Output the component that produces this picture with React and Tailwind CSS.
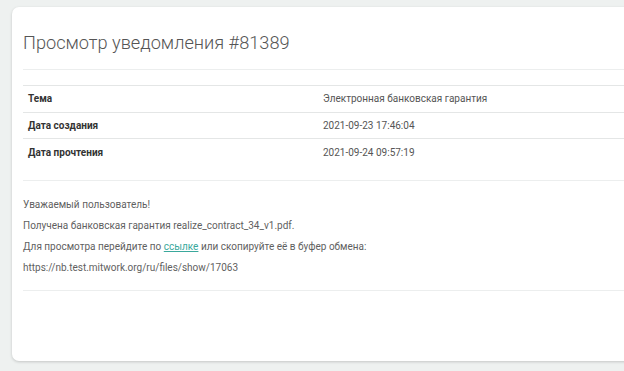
export default function App() {
  const rows = [
    ["Тема", "Электронная банковская гарантия"],
    ["Дата создания", "2021-09-23 17:46:04"],
    ["Дата прочтения", "2021-09-24 09:57:19"],
  ];
  return (
    <div
      className="w-[624px] h-[371px] overflow-hidden bg-[#eef1f0] pt-[7px] pl-[12px]"
      style={{ fontFamily: "Roboto, 'Liberation Sans', sans-serif" }}
    >
      <div className="w-[700px] h-[354px] bg-white rounded-[7px] shadow-[0_1px_3px_rgba(0,0,0,0.18)] pl-[11px] pt-[24px]">
        <h1 className="text-[18.2px] leading-[24px] font-light text-[#555] h-[38px]">
          Просмотр уведомления #81389
        </h1>
        <div className="border-t border-[#eceeee] pt-[15px]">
          <table className="w-full border-collapse text-[10px]">
            <tbody>
              {rows.map(([k, v]) => (
                <tr key={k} className="border-t border-[#e4e6e6]">
                  <td className="w-[294px] px-[5px] h-[26.5px] font-bold text-[#333]">{k}</td>
                  <td className="px-[6px] h-[26.5px] text-[#555]">{v}</td>
                </tr>
              ))}
            </tbody>
          </table>
        </div>
        <div className="border-t border-[#eceeee] mt-[15px] pt-[13px] pb-[12px] text-[10px] text-[#5f5f5f] leading-[21px]">
          <p>Уважаемый пользователь!</p>
          <p>Получена банковская гарантия realize_contract_34_v1.pdf.</p>
          <p>
            Для просмотра перейдите по{" "}
            <a className="text-[#3aa89c] underline">ссылке</a> или скопируйте её в буфер обмена:
          </p>
          <p>https://nb.test.mitwork.org/ru/files/show/17063</p>
        </div>
        <div className="border-t border-[#eceeee]" />
      </div>
    </div>
  );
}
